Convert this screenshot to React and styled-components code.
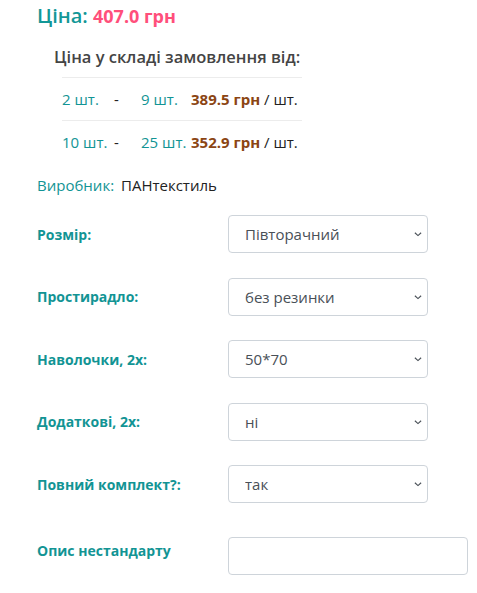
import React, { useState } from "react";
import styled, { createGlobalStyle } from "styled-components";

const GlobalStyle = createGlobalStyle`
  body {
    margin: 0;
    background: #fff;
    font-family: "Open Sans", "Noto Sans", sans-serif;
  }
`;

const tiers = [
  { from: "2 шт.", to: "9 шт.", price: "389.5" },
  { from: "10 шт.", to: "25 шт.", price: "352.9" },
];

const options = [
  { label: "Розмір:", value: "Півторачний" },
  { label: "Простирадло:", value: "без резинки" },
  { label: "Наволочки, 2х:", value: "50*70" },
  { label: "Додаткові, 2х:", value: "ні" },
  { label: "Повний комплект?:", value: "так" },
];

function App() {
  const [note, setNote] = useState("");

  return (
    <Wrapper>
      <GlobalStyle />
      <Title>
        Ціна: <Price>407.0 грн</Price>
      </Title>

      <Tiers>
        <TiersHeading>Ціна у складі замовлення від:</TiersHeading>
        {tiers.map((t) => (
          <TierRow key={t.from}>
            <Qty>{t.from}</Qty>
            <Dash>-</Dash>
            <Qty>{t.to}</Qty>
            <span>
              <TierPrice>{t.price} грн</TierPrice> / шт.
            </span>
          </TierRow>
        ))}
      </Tiers>

      <Maker>
        <MakerLabel>Виробник:</MakerLabel> ПАНтекстиль
      </Maker>

      <Form>
        {options.map((o) => (
          <FieldRow key={o.label}>
            <Label>{o.label}</Label>
            <SelectWrap>
              <Select defaultValue={o.value}>
                <option>{o.value}</option>
              </Select>
              <Chevron viewBox="0 0 16 16">
                <path d="M3 6l5 4.5 5-4.5" />
              </Chevron>
            </SelectWrap>
          </FieldRow>
        ))}
        <FieldRow $last>
          <Label $top>Опис нестандарту</Label>
          <Input value={note} onChange={(e) => setNote(e.target.value)} />
        </FieldRow>
      </Form>
    </Wrapper>
  );
}

const Wrapper = styled.div`
  padding: 3px 0 0 37px;
  width: 440px;
`;

const Title = styled.div`
  font-size: 20px;
  font-weight: 600;
  color: #139797;
  line-height: 26px;
`;

const Price = styled.span`
  color: #ff4f7b;
  font-weight: 700;
  font-size: 18px;
`;

const Tiers = styled.div`
  margin: 17px 0 0 17px;
  width: 248px;
`;

const TiersHeading = styled.div`
  font-size: 16.5px;
  font-weight: 600;
  color: #444;
  line-height: 22px;
  padding-bottom: 9px;
`;

const TierRow = styled.div`
  display: grid;
  grid-template-columns: 52px 27px 50px auto;
  align-items: center;
  margin-left: 8px;
  width: 240px;
  height: 42px;
  border-top: 1px solid #ececec;
  font-size: 15px;
  color: #222;
  white-space: nowrap;
`;

const Qty = styled.span`
  color: #129494;
`;

const Dash = styled.span`
  color: #222;
`;

const TierPrice = styled.b`
  color: #8b4513;
  font-weight: 700;
`;

const Maker = styled.div`
  margin-top: 12px;
  font-size: 15px;
  color: #222;
`;

const MakerLabel = styled.span`
  color: #129494;
  margin-right: 3px;
`;

const Form = styled.div`
  display: flex;
  flex-direction: column;
  gap: 24.5px;
  margin-top: 20px;
`;

const FieldRow = styled.div`
  display: grid;
  grid-template-columns: 191px auto;
  align-items: ${(p) => (p.$last ? "start" : "center")};
  margin-top: ${(p) => (p.$last ? "9px" : "0")};
`;

const Label = styled.div`
  font-size: 14px;
  font-weight: 700;
  color: #129494;
  padding-top: ${(p) => (p.$top ? "4px" : "0")};
`;

const SelectWrap = styled.div`
  position: relative;
  width: 200px;
`;

const Select = styled.select`
  appearance: none;
  width: 200px;
  height: 38px;
  padding: 0 24px 0 16px;
  border: 1px solid #ced4da;
  border-radius: 4px;
  background: #fff;
  font-family: inherit;
  font-size: 15px;
  color: #495057;
`;

const Chevron = styled.svg`
  position: absolute;
  right: 5px;
  top: 14px;
  width: 10px;
  height: 10px;
  fill: none;
  stroke: #495057;
  stroke-width: 1.8;
  pointer-events: none;
`;

const Input = styled.input`
  box-sizing: border-box;
  width: 240px;
  height: 38px;
  border: 1px solid #ced4da;
  border-radius: 4px;
  font-family: inherit;
  font-size: 15px;
  padding: 0 12px;
`;

export default App;
